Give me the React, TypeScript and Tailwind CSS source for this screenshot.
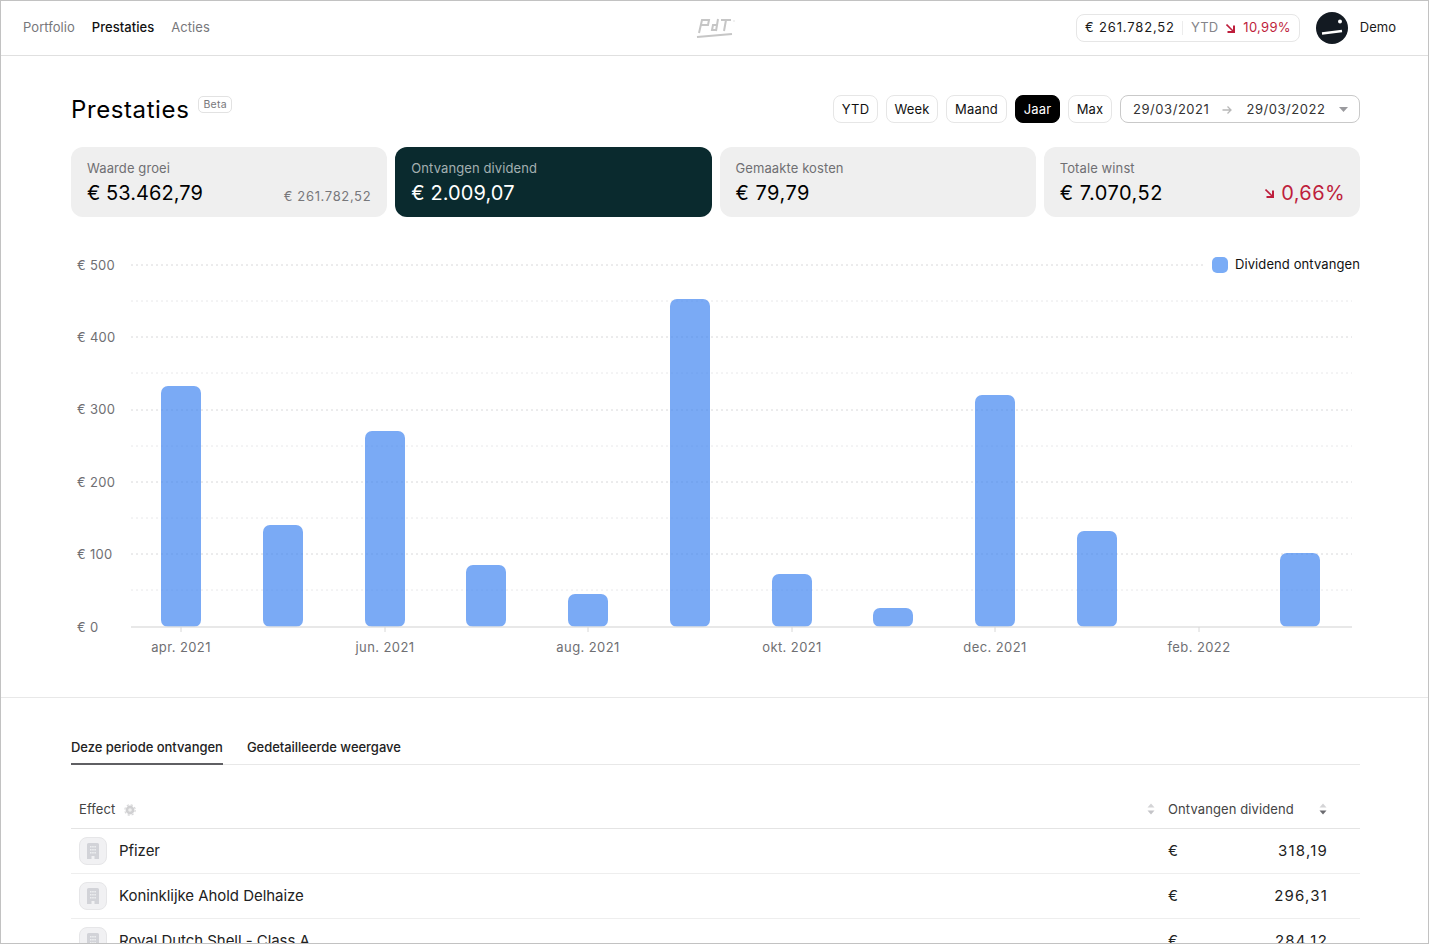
import { useState } from "react";

const bars = [
  { x: 161, top: 386 },
  { x: 263, top: 525 },
  { x: 365, top: 431 },
  { x: 466, top: 565 },
  { x: 568, top: 594 },
  { x: 670, top: 299 },
  { x: 772, top: 574 },
  { x: 873, top: 608 },
  { x: 975, top: 395 },
  { x: 1077, top: 531 },
  { x: 1280, top: 553 },
];

const yLabels = [
  { label: "€ 500", y: 265 },
  { label: "€ 400", y: 337 },
  { label: "€ 300", y: 409 },
  { label: "€ 200", y: 482 },
  { label: "€ 100", y: 554 },
  { label: "€ 0", y: 627 },
];

const xLabels = [
  { label: "apr. 2021", x: 181 },
  { label: "jun. 2021", x: 385 },
  { label: "aug. 2021", x: 588 },
  { label: "okt. 2021", x: 792 },
  { label: "dec. 2021", x: 995 },
  { label: "feb. 2022", x: 1199 },
];

const minorLines = [301, 373, 446, 518, 590];

const rows = [
  { name: "Pfizer", value: "318,19" },
  { name: "Koninklijke Ahold Delhaize", value: "296,31" },
  { name: "Royal Dutch Shell - Class A", value: "284,12" },
];

const ranges = [
  { label: "YTD", width: "w-[45px]" },
  { label: "Week", width: "w-[52px]" },
  { label: "Maand", width: "w-[61px]" },
  { label: "Jaar", width: "w-[45px]" },
  { label: "Max", width: "w-[44px]" },
];

const DownArrow = () => (
  <svg width="9" height="9" viewBox="0 0 9 9" fill="none" stroke="#be1e3c">
    <path d="M0.5 0.5 L7 7" strokeWidth="1.6" />
    <path d="M8 1.5 V8 H1.5" strokeWidth="2" />
  </svg>
);

const SortIcon = ({ active = false }: { active?: boolean }) => (
  <svg width="8" height="12" viewBox="0 0 8 12" className="-mt-[3px] block">
    <path d="M4 0.5 L7.5 4.5 H0.5 Z" fill="#d4d4d6" />
    <path d="M4 11.5 L7.5 7.5 H0.5 Z" fill={active ? "#6b6b70" : "#c4c4c8"} />
  </svg>
);

const BuildingIcon = () => (
  <svg width="12" height="16" viewBox="0 0 12 16">
    <path d="M1.5 0 H10.5 A1.5 1.5 0 0 1 12 1.5 V16 H7.5 V13 H4.5 V16 H0 V1.5 A1.5 1.5 0 0 1 1.5 0 Z" fill="#d2d3d8" />
    {[3, 6, 9].map((y) =>
      [3, 5.2, 7.4].map((x) => <rect key={`${x}-${y}`} x={x} y={y} width="1.5" height="1.5" fill="#eeeff1" />)
    )}
  </svg>
);

const StatCard = ({
  label,
  value,
  dark,
  valueClass = "tracking-[0.5px]",
  right,
}: {
  label: string;
  value: string;
  dark?: boolean;
  valueClass?: string;
  right?: React.ReactNode;
}) => (
  <div className={`h-[70px] rounded-xl px-4 pt-[13px] ${dark ? "bg-[#0a2a2e]" : "bg-[#efefef]"}`}>
    <div className={`text-[13px] leading-4 tracking-[0.1px] ${dark ? "text-[#a3b0b1]" : "text-[#6f6f73]"}`}>{label}</div>
    <div className="mt-[4px] flex items-baseline justify-between">
      <span className={`text-[20px] leading-[26px] ${valueClass} ${dark ? "text-white" : "text-black"}`}>{value}</span>
      {right}
    </div>
  </div>
);

const Chart = () => (
  <svg width="1289" height="440" viewBox="71 240 1289 440" className="block">
    <line x1="131" x2="1205" y1="265" y2="265" stroke="#d8d8da" strokeDasharray="2 3" />
    {[337, 410, 482, 554].map((y) => (
      <line key={y} x1="131" x2="1352" y1={y} y2={y} stroke="#d8d8da" strokeDasharray="2 3" />
    ))}
    {minorLines.map((y) => (
      <line key={y} x1="131" x2="1352" y1={y} y2={y} stroke="#e8e8ea" strokeDasharray="2 3" />
    ))}
    {bars.map((b) => (
      <rect key={b.x} x={b.x} y={b.top} width="40" height={627 - b.top} rx="7" fill="#3b82f0" fillOpacity="0.68" />
    ))}
    <line x1="131" x2="1352" y1="627" y2="627" stroke="#e0e0e0" strokeWidth="1.5" />
    {xLabels.map((l) => (
      <line key={l.x} x1={l.x} x2={l.x} y1="627" y2="632" stroke="#d8d8d8" />
    ))}
    {yLabels.map((l) => (
      <text key={l.label} x="77" y={l.y + 5} fontSize="13" letterSpacing="0.3" fill="#6f6f73">
        {l.label}
      </text>
    ))}
    {xLabels.map((l) => (
      <text key={l.label} x={l.x} y="652" fontSize="13" letterSpacing="0.4" textAnchor="middle" fill="#6f6f73">
        {l.label}
      </text>
    ))}
  </svg>
);

export default function App() {
  const [range, setRange] = useState("Jaar");
  const [tab, setTab] = useState("period");

  return (
    <div className="h-[944px] overflow-hidden border border-[#c2c2c2] bg-white font-['Inter',sans-serif] text-black">
      {/* Top bar */}
      <header className="relative flex h-[55px] items-center justify-between border-b border-[#e0e0e0] pl-[22px] pr-[32px]">
        <nav className="flex gap-[17px] text-[13px] tracking-[0.05px] text-[#77777b]">
          <a>Portfolio</a>
          <a className="font-medium text-[#111]">Prestaties</a>
          <a>Acties</a>
        </nav>
        <svg width="40" height="24" viewBox="0 0 40 24" className="absolute left-[695px] top-[15px]" fill="none" stroke="#c6c6c6" strokeWidth="2">
          <path d="M3 17 L6 4 H13 L12 9 H5" />
          <path d="M21 9 H17 L16 14 H21 M22 3 L20 15" />
          <path d="M25 4 H35 M30 4 L28 15" />
          <path d="M37.5 5 h1" strokeWidth="1" />
          <path d="M1 21 L36 18" strokeWidth="2.2" />
        </svg>
        <div className="flex items-center">
          <div className="flex h-7 items-center rounded-lg border border-[#e6e6e6] px-2 text-[13px]">
            <span className="tracking-[0.85px] text-[#1a1a1a]">€ 261.782,52</span>
            <span className="ml-[7px] mr-2 h-[14px] w-px bg-[#ececec]" />
            <span className="tracking-[0.2px] text-[#85858a]">YTD</span>
            <span className="mx-2"><DownArrow /></span>
            <span className="tracking-[0.3px] text-[#be1e3c]">10,99%</span>
          </div>
          <svg width="32" height="32" viewBox="0 0 32 32" className="ml-4">
            <circle cx="16" cy="16" r="16" fill="#131a22" />
            <circle cx="24" cy="9.5" r="2" fill="#fff" />
            <path d="M6 21.5 L26 19" stroke="#fff" strokeWidth="2.4" />
          </svg>
          <span className="ml-3 text-[13px] text-[#1a1a1a]">Demo</span>
        </div>
      </header>

      <main className="pl-[70px] pr-[68px]">
        {/* Title and range filters */}
        <div className="flex h-[91px] items-start justify-between pt-[39px]">
          <div className="flex items-start">
            <h1 className="text-[24px] leading-[30px] tracking-[0.6px]">Prestaties</h1>
            <span className="ml-[9px] mt-[1px] flex h-[17px] items-center rounded-[5px] border border-[#e2e2e2] px-1 text-[10.5px] tracking-[0.3px] text-[#77777b]">
              Beta
            </span>
          </div>
          <div className="flex items-center gap-2 text-[13px] tracking-[0.2px]">
            {ranges.map((r) => (
              <button
                key={r.label}
                onClick={() => setRange(r.label)}
                className={`h-7 ${r.width} rounded-lg border pt-px ${
                  range === r.label ? "border-black bg-black text-white" : "border-[#e6e6e6] text-[#111]"
                }`}
              >
                {r.label}
              </button>
            ))}
            <div className="flex h-7 w-[240px] items-center rounded-lg border border-[#c9c9c9] pl-3 pr-[11px] pt-px tracking-[0.55px] text-[#333]">
              <span>29/03/2021</span>
              <svg width="10" height="10" viewBox="0 0 10 10" className="ml-[13px] mr-[14px]" fill="none" stroke="#b8b8b8" strokeWidth="1.3">
                <path d="M0.5 5 H9 M5.5 1.5 L9 5 L5.5 8.5" />
              </svg>
              <span>29/03/2022</span>
              <svg width="9" height="5" viewBox="0 0 9 5" className="ml-auto">
                <path d="M0 0 H9 L4.5 5 Z" fill="#9a9a9e" />
              </svg>
            </div>
          </div>
        </div>

        {/* Stat cards */}
        <div className="grid grid-cols-4 gap-2">
          <StatCard
            label="Waarde groei"
            value="€ 53.462,79"
            valueClass="tracking-[0.05px]"
            right={<span className="relative top-px text-[13px] tracking-[0.65px] text-[#77777b]">€ 261.782,52</span>}
          />
          <StatCard label="Ontvangen dividend" value="€ 2.009,07" valueClass="tracking-[0.1px]" dark />
          <StatCard label="Gemaakte kosten" value="€ 79,79" />
          <StatCard
            label="Totale winst"
            value="€ 7.070,52"
            right={
              <span className="-mr-px flex items-center gap-[7px] self-center text-[20px] leading-[26px] tracking-[0.4px] text-[#be1e3c]">
                <DownArrow />
                0,66%
              </span>
            }
          />
        </div>

        {/* Chart */}
        <div className="relative mt-[23px]">
          <Chart />
          <div className="absolute right-0 top-[15px] flex items-center gap-[7px] bg-white pl-[7px] text-[13px] tracking-[0.1px] text-[#111]">
            <span className="h-4 w-4 rounded-[5px] bg-[#7aacf6]" />
            Dividend ontvangen
          </div>
        </div>
      </main>

      <div className="mt-[17px] border-t border-[#e8e8e8] pl-[70px] pr-[68px] pt-[38px]">
        {/* Tabs */}
        <div className="flex h-[29px] gap-6 border-b border-[#e8e8e8] text-[13px] font-medium tracking-[-0.03px] text-[#222]">
          <button
            onClick={() => setTab("period")}
            className={`-mb-px h-[29px] border-b-2 pb-[3px] ${tab === "period" ? "border-[#5f5f63]" : "border-transparent"}`}
          >
            Deze periode ontvangen
          </button>
          <button
            onClick={() => setTab("detail")}
            className={`-mb-px h-[29px] border-b-2 pb-[3px] ${tab === "detail" ? "border-[#5f5f63]" : "border-transparent"}`}
          >
            Gedetailleerde weergave
          </button>
        </div>

        {/* Table */}
        <div className="mt-[25px] flex h-[39px] items-center border-b border-[#e4e4e4] pt-[2px] pl-2 text-[13px] tracking-[0.1px] text-[#444]">
          <span>Effect</span>
          <svg width="12" height="12" viewBox="0 0 12 12" className="ml-[9px]">
            <circle cx="6" cy="6" r="4.4" fill="#d0d0d2" />
            <circle cx="6" cy="6" r="5.2" fill="none" stroke="#d8d8da" strokeWidth="1.2" strokeDasharray="2.2 1.9" />
            <circle cx="6" cy="6" r="1.8" fill="#eeeeee" />
          </svg>
          <span className="ml-auto"><SortIcon /></span>
          <span className="ml-[13px] w-[151px]">Ontvangen dividend</span>
          <span className="mr-[33px]"><SortIcon active /></span>
        </div>
        {rows.map((row) => (
          <div key={row.name} className="flex h-[45px] items-center border-b border-[#eeeeee] pl-2 text-[15px] tracking-[-0.05px] text-[#222]">
            <span className="flex h-7 w-7 items-center justify-center rounded-lg border border-[#e6e6e8] bg-[#f1f1f3]">
              <BuildingIcon />
            </span>
            <span className="ml-3">{row.name}</span>
            <span className="ml-auto mr-8 flex w-[160px] justify-between">
              <span>€</span>
              <span className="tracking-[1.2px]">{row.value}</span>
            </span>
          </div>
        ))}
      </div>
    </div>
  );
}
